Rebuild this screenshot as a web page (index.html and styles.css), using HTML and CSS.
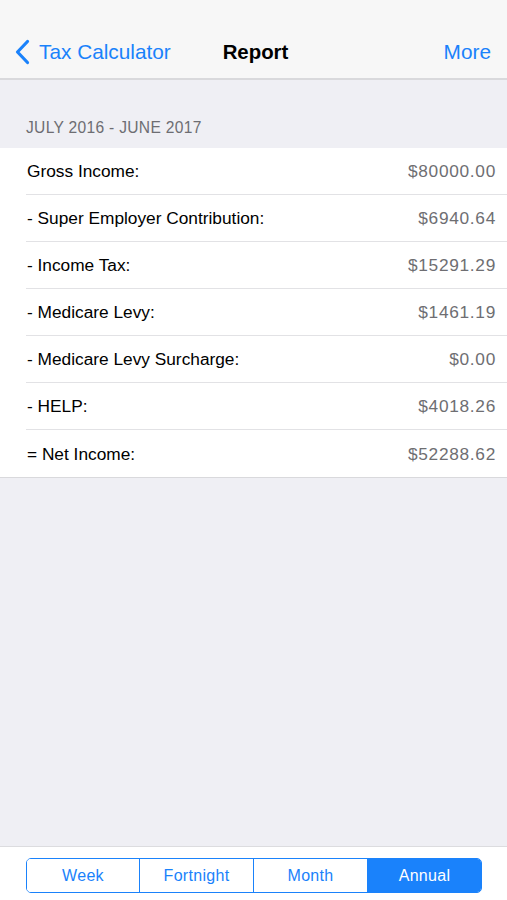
FILE: index.html
```html
<!DOCTYPE html>
<html>
<head>
<meta charset="UTF-8">
<title>Report</title>
<meta name="viewport" content="width=device-width, initial-scale=1.0">
<link rel="stylesheet" href="styles.css">
</head>
<body>
	<div class="screen">
		<div class="navbar">
			<a class="nav-back" href="#">
				<svg width="16" height="26" viewBox="0 0 16 26"><path d="M13.5 2.5 L3.5 13 L13.5 23.5" fill="none" stroke="#1a82fb" stroke-width="3.2" stroke-linecap="round" stroke-linejoin="round"/></svg>
				<span>Tax Calculator</span>
			</a>
			<div class="nav-title">Report</div>
			<a class="nav-more" href="#">More</a>
		</div>

		<div class="content">
			<div class="section-header">JULY 2016 - JUNE 2017</div>
			<ul class="list">
				<li class="row"><span>Gross Income:</span><span class="value">$80000.00</span></li>
				<li class="row"><span>- Super Employer Contribution:</span><span class="value">$6940.64</span></li>
				<li class="row"><span>- Income Tax:</span><span class="value">$15291.29</span></li>
				<li class="row"><span>- Medicare Levy:</span><span class="value">$1461.19</span></li>
				<li class="row"><span>- Medicare Levy Surcharge:</span><span class="value">$0.00</span></li>
				<li class="row"><span>- HELP:</span><span class="value">$4018.26</span></li>
				<li class="row"><span>= Net Income:</span><span class="value">$52288.62</span></li>
			</ul>
		</div>

		<div class="toolbar">
			<div class="segmented">
				<button class="seg">Week</button>
				<button class="seg">Fortnight</button>
				<button class="seg">Month</button>
				<button class="seg active">Annual</button>
			</div>
		</div>
	</div>
</body>
</html>
```

FILE: styles.css
```css
* {
	box-sizing: border-box;
}

body {
	margin: 0;
	font-family: "Liberation Sans", Arial, sans-serif;
	background-color: #efeff4;
}

.screen {
	display: flex;
	flex-direction: column;
	height: 900px;
}

/* 상단 네비게이션 */
.navbar {
	height: 80px;
	padding: 26px 16px 0 14px;
	display: flex;
	align-items: center;
	justify-content: space-between;
	background-color: #f7f7f7;
	border-bottom: 2px solid #d9d9dc;
}

.nav-back {
	display: flex;
	align-items: center;
	gap: 9px;
	color: #1a82fb;
	text-decoration: none;
	font-size: 20.8px;
	width: 170px;
}

.nav-title {
	font-size: 20.4px;
	font-weight: bold;
	color: #000;
	margin-left: -24px;
}

.nav-more {
	color: #1a82fb;
	text-decoration: none;
	font-size: 20.8px;
	width: 140px;
	text-align: right;
}

.content {
	flex: 1;
}

.section-header {
	padding: 39px 26px 11px;
	font-size: 15.6px;
	color: #6d6d72;
	letter-spacing: 0.3px;
}

.list {
	list-style: none;
	margin: 0;
	padding: 0 0 0 26px;
	background-color: #fff;
	border-bottom: 1px solid #d9d9dc;
}

.row {
	height: 47px;
	padding: 1px 11px 0 1px;
	display: flex;
	align-items: center;
	justify-content: space-between;
	font-size: 17.3px;
	color: #000;
	border-bottom: 1px solid #e2e2e5;
}

.row:last-child {
	border-bottom: none;
}

.value {
	color: #6e6e72;
	letter-spacing: 0.7px;
}

/* 하단 기간 선택 */
.toolbar {
	height: 54px;
	padding: 11px 25px 0 26px;
	background-color: #fff;
	border-top: 1px solid #dcdcdf;
}

.segmented {
	display: flex;
	height: 35px;
	border: 1px solid #1a82fb;
	border-radius: 5px;
	overflow: hidden;
}

.seg {
	flex: 1;
	border: none;
	border-left: 1px solid #1a82fb;
	background-color: #fff;
	color: #1a82fb;
	font-family: "Liberation Sans", Arial, sans-serif;
	font-size: 16px;
	letter-spacing: 0.3px;
	padding: 0;
}

.seg:first-child {
	flex: 0 0 112px;
	border-left: none;
}

.seg.active {
	background-color: #1a82fb;
	color: #fff;
}
```
